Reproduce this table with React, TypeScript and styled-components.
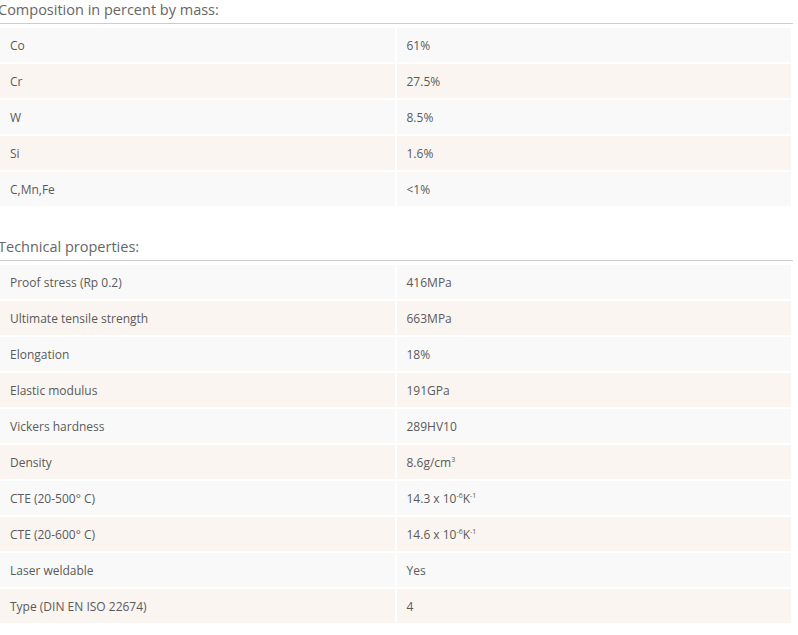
import React from "react";
import styled, { createGlobalStyle } from "styled-components";

const Global = createGlobalStyle`
  html, body { margin: 0; padding: 0; background: #fff; }
  body { font-family: "Open Sans", Lato, sans-serif; color: #5c5c5c; }
`;

const Page = styled.div`
  margin-left: -2px;
  width: 795px;
`;

const Heading = styled.h3<{ $first?: boolean }>`
  margin: ${(p) => (p.$first ? "0" : "29px")} 0 0 0;
  height: 23px;
  font-size: 14.5px;
  font-weight: 400;
  line-height: 19px;
  color: #666;
  border-bottom: 1px solid #cccccc;
  box-sizing: content-box;
`;

const Table = styled.table`
  width: 795px;
  margin-top: 2px;
  border-collapse: separate;
  border-spacing: 2px;
  table-layout: fixed;
`;

const Row = styled.tr<{ $alt: boolean }>`
  background: ${(p) => (p.$alt ? "#faf5f1" : "#f9f9f9")};
`;

const Cell = styled.td`
  height: 34px;
  padding: 0 10px;
  box-sizing: border-box;
  font-size: 12px;
  color: #5a5a5a;
  vertical-align: middle;
`;

const Sup = styled.sup`
  font-size: 7px;
  vertical-align: 5px;
  line-height: 0;
`;

type Item = [string, React.ReactNode];

const composition: Item[] = [
  ["Co", "61%"],
  ["Cr", "27.5%"],
  ["W", "8.5%"],
  ["Si", "1.6%"],
  ["C,Mn,Fe", "<1%"],
];

const technical: Item[] = [
  ["Proof stress (Rp 0.2)", "416MPa"],
  ["Ultimate tensile strength", "663MPa"],
  ["Elongation", "18%"],
  ["Elastic modulus", "191GPa"],
  ["Vickers hardness", "289HV10"],
  ["Density", <>8.6g/cm<Sup>3</Sup></>],
  ["CTE (20-500° C)", <>14.3 x 10<Sup>-6</Sup>K<Sup>-1</Sup></>],
  ["CTE (20-600° C)", <>14.6 x 10<Sup>-6</Sup>K<Sup>-1</Sup></>],
  ["Laser weldable", "Yes"],
  ["Type (DIN EN ISO 22674)", "4"],
];

const DataTable = ({ items }: { items: Item[] }) => (
  <Table>
    <tbody>
      {items.map(([k, v], i) => (
        <Row key={k} $alt={i % 2 === 1}>
          <Cell>{k}</Cell>
          <Cell>{v}</Cell>
        </Row>
      ))}
    </tbody>
  </Table>
);

export default function App() {
  return (
    <Page>
      <Global />
      <Heading $first>Composition in percent by mass:</Heading>
      <DataTable items={composition} />
      <Heading>Technical properties:</Heading>
      <DataTable items={technical} />
    </Page>
  );
}
